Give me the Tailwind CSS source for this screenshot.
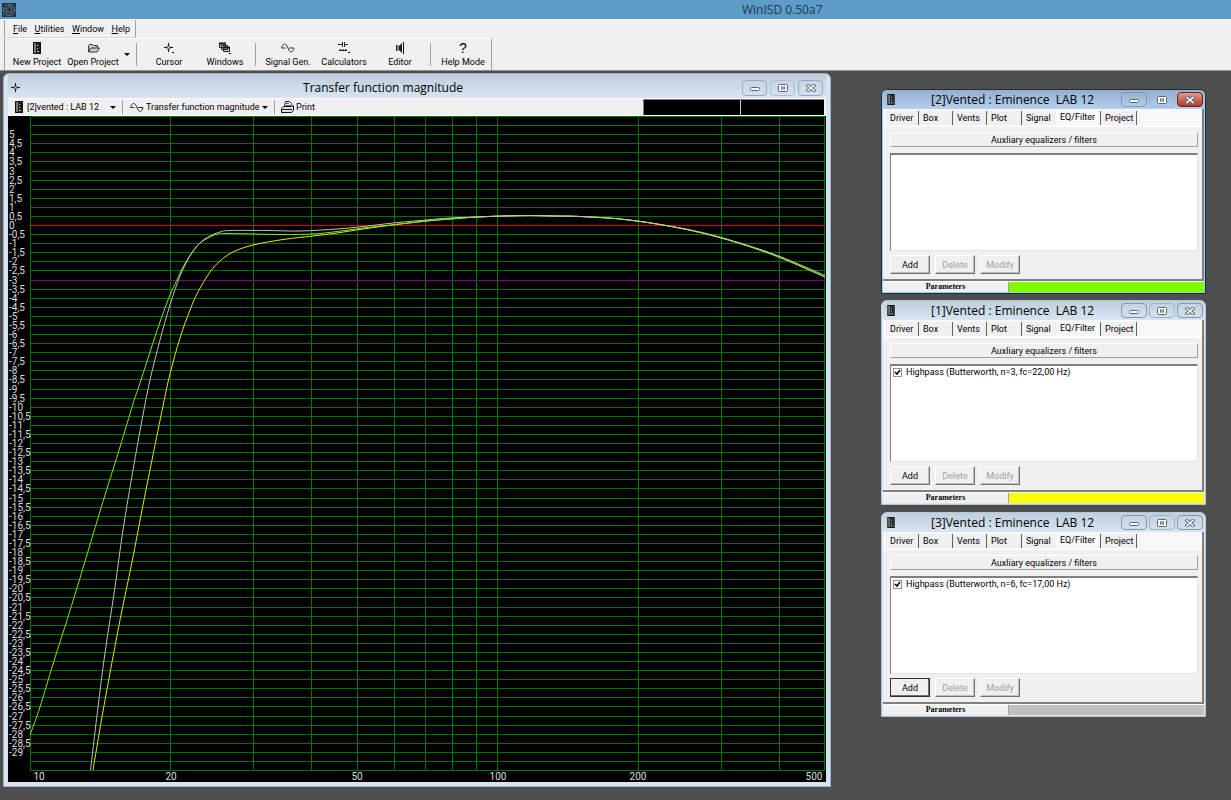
<!DOCTYPE html>
<html lang="en">

<head>
    <meta charset="UTF-8">
    <meta name="viewport" content="width=device-width, initial-scale=1.0">
    <title>WinISD 0.50a7</title>
    <script src="https://cdn.jsdelivr.net/npm/@tailwindcss/browser@4"></script>
</head>

<body class="bg-[#4f4f4f] font-['Roboto','Liberation_Sans',sans-serif] text-[9px] leading-3 whitespace-nowrap text-black">
    <!-- shared icons -->
    <svg class="hidden">
        <symbol id="i-speaker" viewBox="0 0 8 12">
            <rect x=".5" y=".5" width="7" height="11" fill="#777" stroke="#111" />
            <path d="M3 1h4v10H3z" fill="#222" />
            <path d="M4 3h1v1H4zM4 6h1v1H4zM4 9h2v1H4z" fill="#ccc" />
        </symbol>
        <symbol id="i-cross" viewBox="0 0 12 12">
            <path d="M5.500 1v3.500M5.500 6.500V10M1 5.500h3.500M6.500 5.500H10" stroke="#111" />
            <path d="M4 4h3v3H4z" fill="none" stroke="#555" stroke-width=".8" />
        </symbol>
        <symbol id="i-wave" viewBox="0 0 14 11">
            <path d="M.5 5.500C2 .5 4.500 .5 6 3.500L8 8C9.500 10.500 12 10 13 5.500M.5 5.500h4M8 5.500h5" fill="none" stroke="#333" />
        </symbol>
        <symbol id="i-min" viewBox="0 0 10 8">
            <rect x=".5" y="3.500" width="9" height="3" rx="1" fill="#fff" stroke="#5b6478" />
        </symbol>
        <symbol id="i-max" viewBox="0 0 10 8">
            <rect x=".5" y=".5" width="9" height="7" rx="1" fill="#fff" stroke="#5b6478" />
            <rect x="3.500" y="3" width="3" height="2" fill="#fff" stroke="#5b6478" />
        </symbol>
        <symbol id="i-close" viewBox="0 0 10 8">
            <path d="M2 1.500l6 5M8 1.500l-6 5" stroke="#5b6478" stroke-width="3.500" stroke-linecap="square" />
            <path d="M2 1.500l6 5M8 1.500l-6 5" stroke="#fff" stroke-width="1.600" stroke-linecap="square" />
        </symbol>
    </svg>

    <div class="flex h-screen flex-col overflow-hidden">
        <!-- title bar -->
        <header class="relative flex h-[19px] items-center bg-[#5d9bc9]">
            <svg class="ml-0.5 size-[14px]" viewBox="0 0 14 14">
                <rect width="14" height="14" fill="#26323c" />
                <circle cx="7" cy="7" r="5.500" fill="none" stroke="#8ba3b5" stroke-dasharray="2 1" />
                <circle cx="7" cy="7" r="3" fill="none" stroke="#5f82a0" stroke-dasharray="2 1" />
                <path d="M1 4l4 3 3-5 5 4M2 12l4-4 6 3" fill="none" stroke="#3c678c" />
            </svg>
            <h1 class="absolute left-[742px] font-['Open_Sans',sans-serif] text-xs text-[#26394a]">WinISD 0.50a7</h1>
        </header>

        <div class="border-t border-b border-t-white border-b-[#8d8d85] bg-[#f0f0f0]">
            <!-- menu -->
            <nav class="ml-1 flex h-[18px] w-[132px] items-center justify-between border-r border-b border-l border-[#a0a0a0] border-b-[#d8d8d8] pr-[5px] pl-2">
                <a href="#"><u>F</u>ile</a>
                <a href="#"><u>U</u>tilities</a>
                <a href="#"><u>W</u>indow</a>
                <a href="#"><u>H</u>elp</a>
            </nav>
            <!-- toolbar -->
            <div class="flex">
                <div class="ml-1 flex h-8 items-stretch border-t border-r border-l border-t-white border-r-[#a0a0a0] border-l-[#a0a0a0] pl-1">
                    <button class="flex w-14 flex-col items-center justify-center gap-0.5"><svg class="h-3 w-2"><use href="#i-speaker" /></svg>New Project</button>
                    <button class="flex w-14 flex-col items-center justify-center gap-0.5">
                        <svg class="h-3 w-[13px]" viewBox="0 0 13 12"><path d="M1.500 10V3.500l1-1h3l1 1h4V6M1.500 10L4 6h8.500L10 10z" fill="#ccc" stroke="#333" /></svg>Open Project</button>
                    <button aria-label="Open recent" class="flex w-3 items-center justify-center"><svg class="h-[3px] w-[6px]" viewBox="0 0 6 3"><path d="M0 0h6L3 3z" /></svg></button>
                    <i class="my-1 mr-1 ml-[3px] w-px bg-[#a0a0a0]"></i>
                    <button class="flex w-14 flex-col items-center justify-center gap-0.5"><svg class="size-3" viewBox="0 0 12 12"><use href="#i-cross" /><path d="M9 10h2v1H9z" /></svg>Cursor</button>
                    <button class="flex w-14 flex-col items-center justify-center gap-0.5">
                        <svg class="size-3" viewBox="0 0 12 12"><path d="M.5 1.500h6v4h-6zM2.500 3.500h6v4h-6zM4.500 5.500h6v4h-6z" fill="#ccc" stroke="#222" /><path d="M0 1.500h7M4 5.500h7" stroke="#111" stroke-width="2" /><path d="M10 11h2v1h-2z" /></svg>Windows</button>
                    <i class="my-1 mr-1 ml-0.5 w-px bg-[#a0a0a0]"></i>
                    <button class="flex w-14 flex-col items-center justify-center gap-0.5"><svg class="h-3 w-[14px]"><use href="#i-wave" /></svg>Signal Gen.</button>
                    <button class="flex w-14 flex-col items-center justify-center gap-0.5">
                        <svg class="h-3 w-[12px]" viewBox="0 0 12 12"><path d="M0 2.500h4M6 2.500h4M4.500 0v5M6.500 0v5M1 8.500h8" stroke="#222" /><path d="M1 7.500h2M4 7.500h2M7 7.500h2" stroke="#777" /><path d="M10 10h2v1h-2z" /></svg>Calculators</button>
                    <button class="flex w-14 flex-col items-center justify-center gap-0.5">
                        <svg class="h-3 w-2" viewBox="0 0 8 12"><path d="M0 3h1v6H0zM1.500 3h1v6h-1zM3 4l3-3v10L3 8z" fill="#222" /><path d="M7.500 0v12" stroke="#111" /></svg>Editor</button>
                    <i class="my-1 mr-1 ml-0.5 w-px bg-[#a0a0a0]"></i>
                    <button class="flex w-14 flex-col items-center justify-center gap-0.5"><span class="h-3 font-['Liberation_Sans',sans-serif] text-sm leading-3">?</span>Help Mode</button>
                </div>
            </div>
        </div>

        <!-- MDI desktop -->
        <main id="desktop" class="relative flex-1">
            <section class="absolute top-0.5 left-[3px] flex w-[828px] flex-col rounded-t-md border border-[#9db0c4] bg-[#d7e4f2] px-1 pb-1">
                <div class="relative flex h-6 items-center justify-end gap-[3px] bg-linear-to-b from-[#c0cfdd] to-[#d7e4f2] pt-[3px] pr-[3px]">
                    <svg class="absolute left-0.5 size-3"><use href="#i-cross" /></svg>
                    <h2 class="absolute inset-x-0 pr-[68px] text-center font-['Open_Sans',sans-serif] text-xs">Transfer function magnitude</h2>
                    <button aria-label="Minimize" class="relative flex h-4 w-[25px] items-center justify-center rounded-sm border border-[#98a8bd]"><svg class="h-2 w-2.5"><use href="#i-min" /></svg></button>
                    <button aria-label="Maximize" class="relative flex h-4 w-[25px] items-center justify-center rounded-sm border border-[#b0bfd2]"><svg class="h-2 w-2.5"><use href="#i-max" /></svg></button>
                    <button aria-label="Close" class="relative flex h-4 w-[25px] items-center justify-center rounded-sm border border-[#98a8bd]"><svg class="h-2 w-2.5"><use href="#i-close" /></svg></button>
                </div>
                <div class="flex h-[18px] items-center border-t border-b border-white bg-[#f0f0f0]">
                    <button class="flex w-[112px] items-center gap-1 pl-[7px]"><svg class="h-3 w-2 shrink-0"><use href="#i-speaker" /></svg>[2]vented : LAB 12<svg class="mr-1 ml-auto h-[3px] w-[6px] shrink-0" viewBox="0 0 6 3"><path d="M0 0h6L3 3z" /></svg></button>
                    <i class="mx-0.5 h-[14px] w-px bg-[#a0a0a0]"></i>
                    <button class="flex w-[147px] items-center gap-0.5 pl-[5px]"><svg class="h-[11px] w-[14px] shrink-0"><use href="#i-wave" /></svg>Transfer function magnitude<svg class="mr-1 ml-auto h-[3px] w-[6px] shrink-0" viewBox="0 0 6 3"><path d="M0 0h6L3 3z" /></svg></button>
                    <i class="mx-0.5 h-[14px] w-px bg-[#a0a0a0]"></i>
                    <button class="flex items-center gap-0.5 pl-1">
                        <svg class="h-3 w-[13px] shrink-0" viewBox="0 0 13 12"><path d="M3.500 5.500l1-5h4l2 2-1 3" fill="#fff" stroke="#222" /><path d="M5 2.500h3M5 4.500h4" stroke="#555" /><path d="M.5 7.500l2-2h8l2-1v5l-2 2H.5z" fill="#ddd" stroke="#111" /><path d="M1 8.500h10" stroke="#222" /></svg>Print</button>
                    <div class="mr-0.5 ml-auto flex h-4 w-[181px] gap-px border-t border-l border-[#808080] bg-[#c8c8c8]"><i class="w-24 bg-black"></i><i class="flex-1 bg-black"></i></div>
                </div>
                <svg id="plot" class="h-[666px] w-full bg-black text-[10px]" viewBox="8 116 818 666" role="img" aria-label="Transfer function magnitude"></svg>
            </section>
        </main>
    </div>

    <script>
        // frequency in Hz and level in dB to plot coordinates
        const fx = f => 30 + 795 * Math.log(f / 10) / Math.log(50);
        const dy = d => 116.5 + (6 - d) * 654 / 36;

        const tail = [[427, 221], [450, 219], [477, 217], [503, 216], [530, 215.5], [555, 216], [580, 216.5], [620, 219], [660, 224.5], [700, 232.5], [740, 243.5], [780, 257.5], [825, 277]];
        const curves = [
            { color: '#e8e800', pts: [[93, 770], [102, 717], [110, 673], [120, 620], [132, 562], [142, 510], [152, 460], [163, 406], [170, 374], [180, 338], [190, 310], [198, 292], [210, 272], [220, 261], [233, 252], [253, 245], [283, 239.5], [313, 236], [337, 233], [363, 229], [393, 225], ...tail] },
            { color: '#78f000', pts: [[30, 735], [40, 707], [53, 664], [68, 617], [80, 578], [92, 538], [105, 495], [120, 447], [133, 404], [141, 380], [150, 352], [160, 322], [170, 295], [177, 280], [183, 267], [193, 251], [200, 243], [210, 237], [218, 234], [227, 233.5], [253, 234], [283, 234.5], [313, 234], [337, 231.5], [363, 228], [390, 225], ...tail] },
            { color: '#c0c0c0', pts: [[90.5, 770], [98, 707], [105, 653], [115, 587], [123, 530], [133, 470], [142, 420], [150, 380], [160, 340], [170, 305], [180, 276], [190, 256], [200, 243], [210, 236], [220, 232], [230, 230.5], [267, 230.5], [300, 231], [337, 229], [363, 226.5], [393, 223], [420, 220.5], [450, 218], [477, 217], [503, 216], [530, 215.5], [555, 216], [580, 216.5], [620, 219], [660, 224.5], [700, 232], [740, 243], [780, 256.5], [825, 275.5]] }
        ];

        function line(x1, y1, x2, y2, color) {
            return `<path d="M${x1} ${y1}L${x2} ${y2}" stroke="${color}" shape-rendering="crispEdges"/>`;
        }

        // Catmull-Rom spline through all points
        function spline(p) {
            let d = `M${p[0]}`;
            for (let i = 0; i < p.length - 1; i++) {
                const a = p[i - 1] || p[i], b = p[i], c = p[i + 1], e = p[i + 2] || c;
                d += `C${b[0] + (c[0] - a[0]) / 6} ${b[1] + (c[1] - a[1]) / 6} ${c[0] - (e[0] - b[0]) / 6} ${c[1] - (e[1] - b[1]) / 6} ${c[0]} ${c[1]}`;
            }
            return d;
        }

        function drawPlot() {
            let out = '', labels = '';
            for (let d = 6; d >= -30; d -= 0.5) {
                const y = Math.floor(dy(d)) + 0.5;
                out += line(30, y, 825, y, '#007000');
                if (d <= 5 && d >= -29) {
                    labels += `<text x="9" y="${Math.floor(y) + 4}" fill="#dcdcdc">${String(d).replace('.', ',')}</text>`;
                }
            }
            [10, 20, 30, 40, 50, 60, 70, 80, 90, 100, 200, 300, 400, 500].forEach(f => {
                const x = Math.min(Math.floor(fx(f)), 824) + 0.5;
                out += line(x, 116, x, 771, '#007400');
            });
            // 0 dB and -3 dB markers
            out += '<rect x="30" y="225" width="795" height="1" fill="#e00000"/>';
            out += '<rect x="30" y="280" width="795" height="1" fill="#780078"/>';
            curves.forEach(c => {
                out += `<path d="${spline(c.pts)}" fill="none" stroke="${c.color}"/>`;
            });
            [[10, 39], [20, 171], [50, 357], [100, 498], [200, 638], [500, 814]].forEach(([f, x]) => {
                labels += `<text x="${x}" y="780" fill="#dcdcdc" text-anchor="middle">${f}</text>`;
            });
            document.getElementById('plot').innerHTML = out + labels;
        }

        const boxes = [
            { n: 2, pos: 'top-[18px]', bar: 'bg-[#80ff00]', filter: '', active: true },
            { n: 1, pos: 'top-[229px]', bar: 'bg-[#ffff00]', filter: 'Highpass (Butterworth, n=3, fc=22,00 Hz)' },
            { n: 3, pos: 'top-[441px]', bar: 'bg-[#c0c0c0]', filter: 'Highpass (Butterworth, n=6, fc=17,00 Hz)', focus: true }
        ];
        const tabs = [['Driver', 'w-[33px]'], ['Box', 'w-[34px]'], ['Vents', 'w-[34px]'], ['Plot', 'w-[35px]'], ['Signal', 'w-[34px]'], ['EQ/Filter', 'w-[45px]'], ['Project', 'w-[36px]']];

        function boxWindow(b) {
            const tabRow = tabs.map(([name, w]) => {
                const on = name === 'EQ/Filter';
                const edge = name === 'Signal' ? '' : 'border-r border-[#606060]';
                return `<button role="tab" aria-selected="${on}" class="${w} ${edge} h-[14px] pl-1 text-left ${on ? 'pb-0.5' : 'bg-[#f0f0f0] pt-px'}">${name}</button>`;
            }).join('');
            const item = b.filter ? `<label class="flex items-center gap-1 pl-0.5"><span class="relative size-[9px]"><input type="checkbox" checked class="block size-[9px] appearance-none border border-[#909090] bg-white"><svg class="pointer-events-none absolute inset-0 size-[9px]" viewBox="0 0 9 9"><path d="M2 4l2 2 3-4" fill="none" stroke="#000" stroke-width="1.5"/></svg></span>${b.filter}</label>` : '';
            const btn = 'h-[19px] w-10 border border-white border-r-[#707070] border-b-[#707070] shadow-[inset_-1px_-1px_#c0c0c0]';
            const ctl = 'relative flex h-[15px] w-[26px] items-center justify-center rounded-sm border';
            return `<section class="absolute left-[881px] ${b.pos} flex w-[325px] flex-col rounded-t-md border px-px ${b.active ? 'border-[#1c2c38] bg-[#8fd4ea]' : 'border-[#b4c6d8] bg-[#d7e4f2]'}">
                <div class="relative flex h-[19px] items-center justify-end gap-0.5 rounded-t-md bg-linear-to-b pr-px ${b.active ? 'from-[#93afd0] to-[#b6d0ec]' : 'from-[#c0cfdd] to-[#d7e4f2]'}">
                    <svg class="absolute left-1 h-[11px] w-2"><use href="#i-speaker"/></svg>
                    <h2 class="absolute left-12 whitespace-pre font-['Open_Sans',sans-serif] text-xs">[${b.n}]Vented : Eminence  LAB 12</h2>
                    <button aria-label="Minimize" class="${ctl} border-[#8496b0]"><svg class="h-2 w-2.5"><use href="#i-min"/></svg></button>
                    <button aria-label="Maximize" class="${ctl} border-[#a0b2ca]"><svg class="h-2 w-2.5"><use href="#i-max"/></svg></button>
                    <button aria-label="Close" class="${ctl} ${b.active ? 'border-[#6b2018] bg-linear-to-b from-[#dc9a90] to-[#b83424]' : 'border-[#8496b0]'}"><svg class="h-2 w-2.5"><use href="#i-close"/></svg></button>
                </div>
                <div class="border-r-2 border-b-2 border-[#808080] bg-[#f0f0f0]">
                    <div role="tablist" class="flex h-[17px] items-center bg-[#f8f8f8] pl-[3px]">${tabRow}</div>
                    <div class="flex flex-col border-t border-white pt-[5px] pr-1 pb-[5px] pl-[7px]">
                        <div class="h-[15px] border border-white border-r-[#a0a0a0] border-b-[#a0a0a0] text-center leading-[14px]">Auxliary equalizers / filters</div>
                        <div class="mt-1.5 h-[98px] border border-t-2 border-[#808080] border-r-[#e4e4e4] border-b-[#e4e4e4] bg-white">${item}</div>
                        <div class="mt-1 flex gap-[5px]">
                            <button class="${b.focus ? 'h-[19px] w-10 border border-[#303030] shadow-[inset_-1px_-1px_#707070]' : btn}">Add</button>
                            <button disabled class="${btn} text-[#a0a0a0]">Delete</button>
                            <button disabled class="${btn} text-[#a0a0a0]">Modify</button>
                        </div>
                    </div>
                </div>
                <div class="mb-px flex h-[11px] border-t border-white bg-[#f0f0f0]">
                    <span class="w-[126px] border-r border-[#a0a0a0] text-center font-['Liberation_Serif',serif] text-[8px] leading-[10px] font-bold">Parameters</span>
                    <span class="flex-1 ${b.bar}"></span>
                </div>
            </section>`;
        }

        drawPlot();
        document.getElementById('desktop').insertAdjacentHTML('beforeend', boxes.map(boxWindow).join(''));
    </script>
</body>

</html>
